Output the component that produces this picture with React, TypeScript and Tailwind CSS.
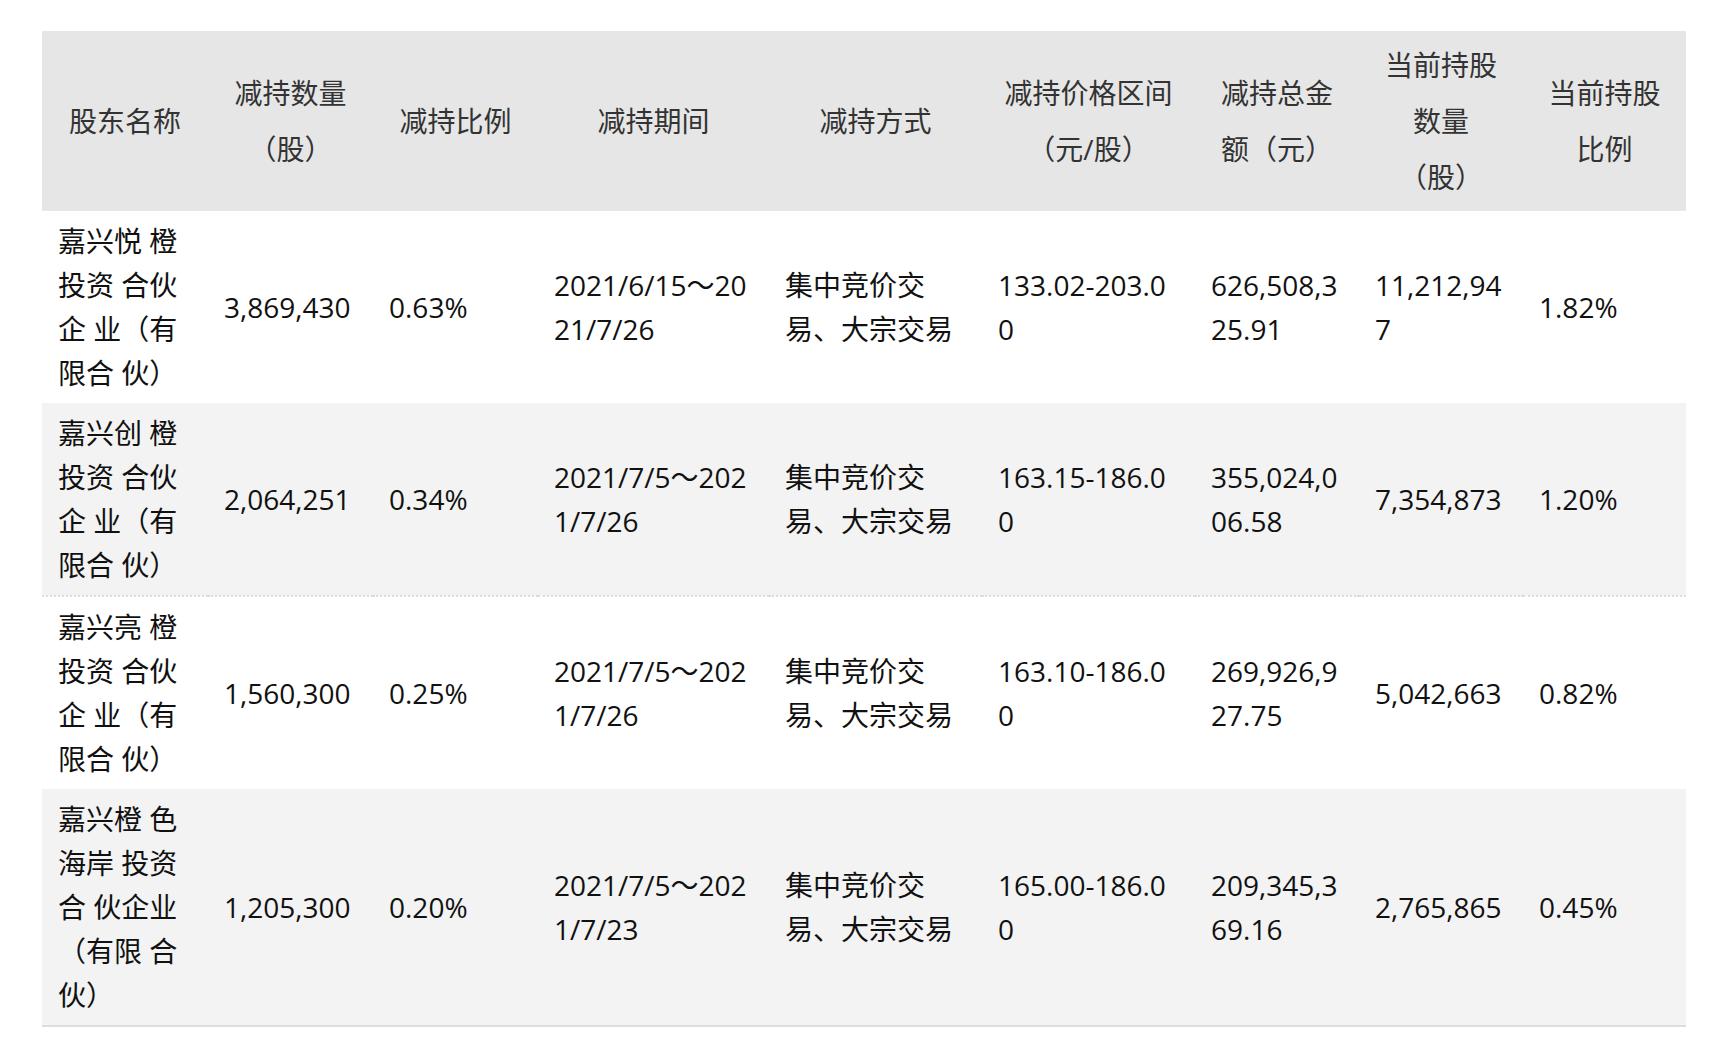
const columns = [
  { title: "股东名称", width: "w-[166px]" },
  { title: "减持数量（股）", width: "w-[165px]" },
  { title: "减持比例", width: "w-[165px]" },
  { title: "减持期间", width: "w-[231px]" },
  { title: "减持方式", width: "w-[213px]" },
  { title: "减持价格区间（元/股）", width: "w-[213px]" },
  { title: "减持总金额（元）", width: "w-[164px]" },
  { title: "当前持股数量（股）", width: "w-[164px]" },
  { title: "当前持股比例", width: "w-[163px]" },
];

const rows = [
  {
    name: "嘉兴悦 橙投资 合伙企 业（有限合 伙）",
    qty: "3,869,430",
    ratio: "0.63%",
    period: "2021/6/15～2021/7/26",
    method: "集中竞价交易、大宗交易",
    price: "133.02-203.00",
    total: "626,508,325.91",
    held: "11,212,947",
    heldRatio: "1.82%",
  },
  {
    name: "嘉兴创 橙投资 合伙企 业（有限合 伙）",
    qty: "2,064,251",
    ratio: "0.34%",
    period: "2021/7/5～2021/7/26",
    method: "集中竞价交易、大宗交易",
    price: "163.15-186.00",
    total: "355,024,006.58",
    held: "7,354,873",
    heldRatio: "1.20%",
  },
  {
    name: "嘉兴亮 橙投资 合伙企 业（有限合 伙）",
    qty: "1,560,300",
    ratio: "0.25%",
    period: "2021/7/5～2021/7/26",
    method: "集中竞价交易、大宗交易",
    price: "163.10-186.00",
    total: "269,926,927.75",
    held: "5,042,663",
    heldRatio: "0.82%",
  },
  {
    name: "嘉兴橙 色海岸 投资合 伙企业（有限 合伙）",
    qty: "1,205,300",
    ratio: "0.20%",
    period: "2021/7/5～2021/7/23",
    method: "集中竞价交易、大宗交易",
    price: "165.00-186.00",
    total: "209,345,369.16",
    held: "2,765,865",
    heldRatio: "0.45%",
  },
];

const rowStyles = [
  "bg-white",
  "bg-[#f3f3f3] border-b-2 border-dotted border-[#dcdcdc]",
  "bg-white",
  "bg-[#f3f3f3] border-b-2 border-solid border-[#dddddd]",
];

export default function App() {
  return (
    <div className="min-h-screen bg-white pt-[31px] pl-[42px] font-['Open_Sans','Noto_Sans_CJK_SC',sans-serif] [text-spacing-trim:space-all]">
      <table className="table-fixed border-collapse w-[1644px] text-[28px]">
        <colgroup>
          {columns.map((c) => (
            <col key={c.title} className={c.width} />
          ))}
        </colgroup>
        <thead>
          <tr className="bg-[#e6e6e6]">
            {columns.map((c) => (
              <th
                key={c.title}
                className="px-4 py-[6px] h-[180px] align-middle text-center font-normal leading-[56px] text-[#333333] break-all"
              >
                {c.title}
              </th>
            ))}
          </tr>
        </thead>
        <tbody>
          {rows.map((r, i) => (
            <tr key={r.name} className={rowStyles[i]}>
              {[r.name, r.qty, r.ratio, r.period, r.method, r.price, r.total, r.held, r.heldRatio].map((v, j) => (
                <td
                  key={j}
                  className="px-4 py-2 align-middle text-left leading-[44px] text-[#111111] break-all"
                >
                  {v}
                </td>
              ))}
            </tr>
          ))}
        </tbody>
      </table>
    </div>
  );
}
